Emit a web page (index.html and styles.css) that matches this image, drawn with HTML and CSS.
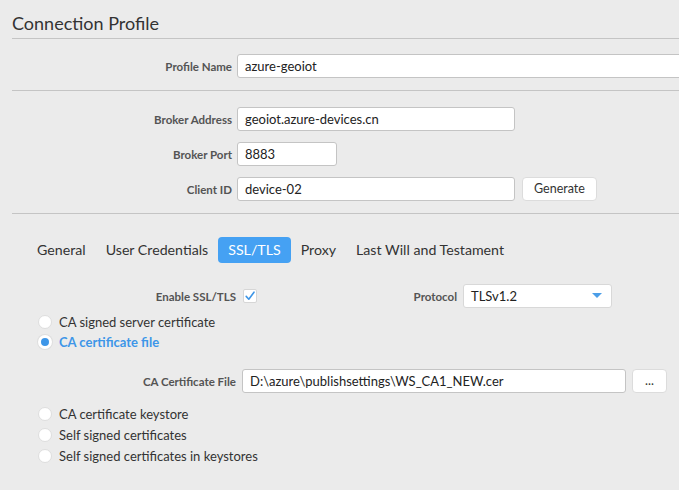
FILE: index.html
```html
<!DOCTYPE html>
<html>
<head>
<meta charset="utf-8">
<link rel="stylesheet" href="styles.css">
</head>
<body>
<div class="page">
  <h1 class="title">Connection Profile</h1>
  <hr class="rule">
  <section class="section s-profile">
    <div class="form-grid">
      <label class="lbl">Profile Name</label>
      <div class="field wide-field">azure-geoiot</div>
    </div>
  </section>
  <hr class="rule">
  <section class="section s-broker">
    <div class="form-grid">
      <label class="lbl">Broker Address</label>
      <div class="field addr-field">geoiot.azure-devices.cn</div>
      <label class="lbl">Broker Port</label>
      <div class="field port-field">8883</div>
      <label class="lbl">Client ID</label>
      <div class="with-btn">
        <div class="field addr-field">device-02</div>
        <div class="btn gen-btn">Generate</div>
      </div>
    </div>
  </section>
  <hr class="rule">
  <section class="section s-tabs">
    <nav class="tabs">
      <span class="tab">General</span>
      <span class="tab">User Credentials</span>
      <span class="tab active">SSL/TLS</span>
      <span class="tab">Proxy</span>
      <span class="tab">Last Will and Testament</span>
    </nav>
    <div class="ssl-grid">
      <label class="lbl">Enable SSL/TLS</label>
      <div class="cell"><span class="checkbox"><svg width="12" height="12" viewBox="0 0 12 12"><path d="M2.2 6.4 L4.8 9.2 L10 2.2" fill="none" stroke="#3d95e6" stroke-width="1.6" stroke-linecap="round" stroke-linejoin="round"/></svg></span></div>
      <label class="lbl">Protocol</label>
      <div class="select">TLSv1.2<svg class="caret" width="10" height="6" viewBox="0 0 10 6"><path d="M0 0 L10 0 L5 5 Z" fill="#4b9ee8"/></svg></div>
    </div>
    <ul class="radios first-group">
      <li class="radio"><span class="dot"></span>CA signed server certificate</li>
      <li class="radio selected"><span class="dot"></span>CA certificate file</li>
    </ul>
    <div class="file-row">
      <label class="lbl">CA Certificate File</label>
      <div class="field file-field">D:\azure\publishsettings\WS_CA1_NEW.cer</div>
      <div class="btn dots-btn">...</div>
    </div>
    <ul class="radios">
      <li class="radio"><span class="dot"></span>CA certificate keystore</li>
      <li class="radio"><span class="dot"></span>Self signed certificates</li>
      <li class="radio"><span class="dot"></span>Self signed certificates in keystores</li>
    </ul>
  </section>
</div>
</body>
</html>
```
FILE: styles.css
```css
html, body {
  margin: 0;
  padding: 0;
  background: #ebebeb;
  overflow: hidden;
}
body {
  font-family: "Lato", "Open Sans", sans-serif;
  color: #333;
  width: 679px;
  height: 490px;
}
.page {
  padding-left: 12px;
}
.title {
  margin: 0;
  padding-top: 11px;
  height: 27px;
  font-size: 18px;
  font-weight: 400;
  line-height: 24px;
  color: #333;
}
.rule {
  margin: 0;
  border: 0;
  height: 1px;
  background: #c4c4c4;
}
.section {
  padding: 15px 0 12px;
}
.s-broker {
  padding: 16px 0 12px;
}
.s-tabs {
  padding: 23px 0 0;
}
.form-grid {
  display: grid;
  grid-template-columns: 220px 1fr;
  column-gap: 5px;
  row-gap: 11px;
  align-items: center;
}
.lbl {
  text-align: right;
  font-size: 11.5px;
  font-weight: 700;
  color: #545454;
}
.field {
  box-sizing: border-box;
  height: 24px;
  background: #fff;
  border: 1px solid #c4c4c4;
  border-radius: 3px;
  padding: 0 7px;
  font-size: 13px;
  line-height: 22px;
  color: #222;
  white-space: nowrap;
  overflow: hidden;
}
.wide-field { width: 470px; }
.addr-field { width: 278px; }
.port-field { width: 100px; }
.with-btn {
  display: flex;
  gap: 7px;
  align-items: center;
}
.btn {
  box-sizing: border-box;
  height: 24px;
  background: #fff;
  border: 1px solid #dcdcdc;
  border-radius: 4px;
  font-size: 12.5px;
  line-height: 22px;
  text-align: center;
  color: #333;
}
.gen-btn { width: 75px; }
.tabs {
  display: flex;
  margin-left: 15px;
}
.tab {
  height: 26px;
  line-height: 26px;
  padding: 0 10px;
  font-size: 14.2px;
  color: #333;
  border-radius: 4px;
}
.tab.active {
  background: #45a1f3;
  color: #fff;
}
.ssl-grid {
  display: grid;
  grid-template-columns: 224px 110px 99px 149px;
  column-gap: 6px;
  align-items: center;
  margin-top: 21px;
}
.cell {
  display: flex;
  align-items: center;
}
.checkbox {
  box-sizing: border-box;
  width: 14px;
  height: 14px;
  margin-left: 1px;
  background: #fff;
  border: 1px solid #d6d6d6;
  border-radius: 2px;
  display: flex;
  align-items: center;
  justify-content: center;
}
.select {
  box-sizing: border-box;
  height: 24px;
  background: #fff;
  border: 1px solid #d8d8d8;
  border-radius: 3px;
  padding: 0 7px;
  font-size: 13px;
  line-height: 22px;
  color: #222;
  display: flex;
  justify-content: space-between;
  align-items: center;
}
.caret { margin-right: 2px; }
.radios {
  list-style: none;
  margin: 0;
  padding: 0 0 0 26px;
}
.radio {
  height: 21px;
  display: flex;
  align-items: center;
  gap: 7px;
  font-size: 13px;
  color: #333;
}
.first-group {
  margin-top: 4px;
}
.first-group .radio {
  height: 20px;
}
.dot {
  box-sizing: border-box;
  width: 14px;
  height: 14px;
  border-radius: 50%;
  background: #fff;
  border: 1px solid #dedede;
}
.radio.selected {
  color: #3d96e8;
  font-weight: 700;
}
.radio.selected .dot {
  border: 3px solid #fff;
  background: #3d96e8;
  box-shadow: 0 0 0 1px #dedede;
}
.file-row {
  display: flex;
  align-items: center;
  margin: 17px 0 10px;
}
.file-row .lbl {
  width: 224px;
  margin-right: 6px;
}
.file-field { width: 384px; }
.dots-btn {
  width: 35px;
  margin-left: 6px;
}
```
